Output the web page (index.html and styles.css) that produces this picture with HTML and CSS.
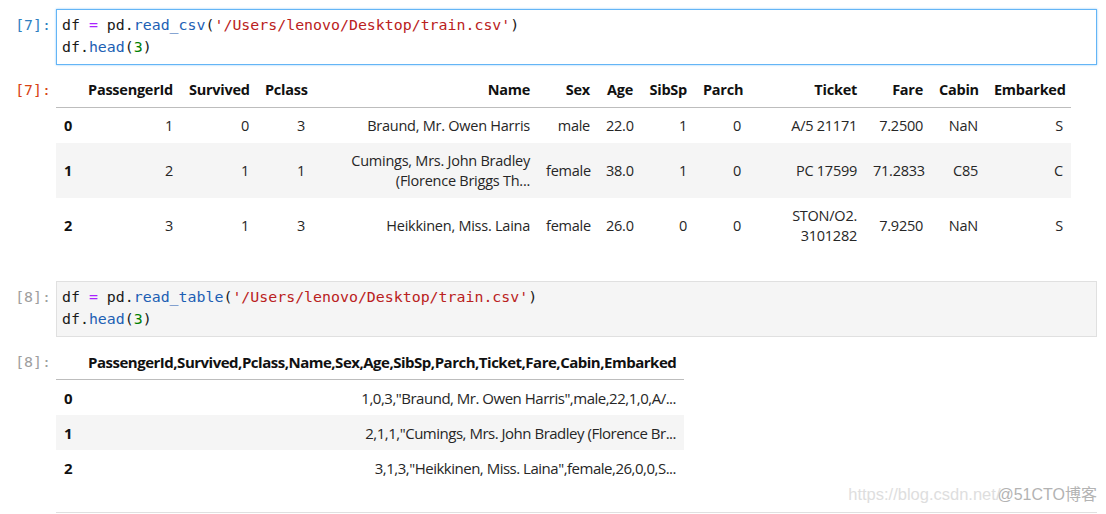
FILE: index.html
```html
<!DOCTYPE html>
<html>
<head>
<meta charset="utf-8">
<link rel="stylesheet" href="styles.css">
</head>
<body>
<div class="notebook">
  <div class="cell">
    <div class="row">
      <div class="prompt in-active">[7]:</div>
      <div class="input active">
        <div class="code-line"><span>df</span> <span class="op">=</span> <span>pd.</span><span class="prop">read_csv</span><span>(</span><span class="str">'/Users/lenovo/Desktop/train.csv'</span><span>)</span></div>
        <div class="code-line"><span>df.</span><span class="prop">head</span><span>(</span><span class="num">3</span><span>)</span></div>
      </div>
    </div>
    <div class="row out">
      <div class="prompt out-prompt">[7]:</div>
      <div class="output">
        <table class="df df-wide">
          <colgroup>
            <col class="c-idx"><col class="c-pid"><col class="c-surv"><col class="c-pcl"><col class="c-name"><col class="c-sex"><col class="c-age"><col class="c-sib"><col class="c-par"><col class="c-tic"><col class="c-fare"><col class="c-cab"><col class="c-emb">
          </colgroup>
          <thead>
            <tr><th></th><th>PassengerId</th><th>Survived</th><th>Pclass</th><th>Name</th><th>Sex</th><th>Age</th><th>SibSp</th><th>Parch</th><th>Ticket</th><th>Fare</th><th>Cabin</th><th>Embarked</th></tr>
          </thead>
          <tbody>
            <tr><th>0</th><td>1</td><td>0</td><td>3</td><td>Braund, Mr. Owen Harris</td><td>male</td><td>22.0</td><td>1</td><td>0</td><td>A/5 21171</td><td>7.2500</td><td>NaN</td><td>S</td></tr>
            <tr><th>1</th><td>2</td><td>1</td><td>1</td><td>Cumings, Mrs. John Bradley (Florence Briggs Th...</td><td>female</td><td>38.0</td><td>1</td><td>0</td><td>PC 17599</td><td>71.2833</td><td>C85</td><td>C</td></tr>
            <tr><th>2</th><td>3</td><td>1</td><td>3</td><td>Heikkinen, Miss. Laina</td><td>female</td><td>26.0</td><td>0</td><td>0</td><td>STON/O2. 3101282</td><td>7.9250</td><td>NaN</td><td>S</td></tr>
          </tbody>
        </table>
      </div>
    </div>
  </div>

  <div class="cell cell-2">
    <div class="row">
      <div class="prompt in-idle">[8]:</div>
      <div class="input idle">
        <div class="code-line"><span>df</span> <span class="op">=</span> <span>pd.</span><span class="prop">read_table</span><span>(</span><span class="str">'/Users/lenovo/Desktop/train.csv'</span><span>)</span></div>
        <div class="code-line"><span>df.</span><span class="prop">head</span><span>(</span><span class="num">3</span><span>)</span></div>
      </div>
    </div>
    <div class="row out">
      <div class="prompt out-idle">[8]:</div>
      <div class="output">
        <table class="df df-narrow">
          <colgroup>
            <col class="c-idx"><col class="c-all">
          </colgroup>
          <thead>
            <tr><th></th><th>PassengerId,Survived,Pclass,Name,Sex,Age,SibSp,Parch,Ticket,Fare,Cabin,Embarked</th></tr>
          </thead>
          <tbody>
            <tr><th>0</th><td>1,0,3,"Braund, Mr. Owen Harris",male,22,1,0,A/...</td></tr>
            <tr><th>1</th><td>2,1,1,"Cumings, Mrs. John Bradley (Florence Br...</td></tr>
            <tr><th>2</th><td>3,1,3,"Heikkinen, Miss. Laina",female,26,0,0,S...</td></tr>
          </tbody>
        </table>
      </div>
    </div>
  </div>

  <div class="next-cell"></div>
</div>
<div class="watermark"><span class="wm-url">https://blog.csdn.net/</span><span class="wm-brand">@51CTO博客</span></div>
</body>
</html>
```

FILE: styles.css
```css
html, body {
  margin: 0;
  padding: 0;
  background: #ffffff;
}

body {
  width: 1106px;
  height: 514px;
  overflow: hidden;
  position: relative;
  font-family: "Open Sans", "Noto Sans", sans-serif;
}

.notebook {
  padding-top: 9px;
  padding-right: 9px;
}

.row {
  display: flex;
  align-items: flex-start;
}

.prompt {
  width: 56px;
  flex: 0 0 56px;
  box-sizing: border-box;
  padding-right: 5px;
  text-align: right;
  font-family: "DejaVu Sans Mono", "Liberation Mono", monospace;
  font-size: 14.9px;
  line-height: 22px;
}

.in-active {
  color: #307fc1;
  padding-top: 5px;
}

.in-idle {
  color: #9e9e9e;
  padding-top: 5px;
}

.out-prompt {
  color: #d84315;
  padding-top: 7px;
}

.out-idle {
  color: #9e9e9e;
  padding-top: 7px;
}

.input {
  flex: 1;
  height: 56px;
  box-sizing: border-box;
  padding: 4px 5px 6px 5px;
}

.input.active {
  background: #ffffff;
  border: 1px solid #64b5f6;
  box-shadow: 0 0 2px #90caf9;
}

.input.idle {
  background: #f5f5f5;
  border: 1px solid #e0e0e0;
}

.code-line {
  font-family: "DejaVu Sans Mono", "Liberation Mono", monospace;
  font-size: 14.9px;
  line-height: 22px;
  height: 22px;
  white-space: pre;
  color: #1a1a1a;
}

.op { color: #aa22ff; }
.prop { color: #1d5fb4; }
.str { color: #ba2121; }
.num { color: #008000; }

.out {
  margin-top: 7px;
}

.output {
  flex: 1;
}

.df {
  border-collapse: collapse;
  table-layout: fixed;
  font-size: 14.5px;
  line-height: 20px;
  letter-spacing: -0.25px;
  color: #262626;
}

.df th, .df td {
  padding: 7.5px 8px;
  text-align: right;
  vertical-align: middle;
  white-space: normal;
}

.df thead th {
  font-weight: 700;
  color: #111;
  border-bottom: 1px solid #bdbdbd;
}

.df tbody th {
  text-align: left;
  font-weight: 700;
  color: #111;
}

.df tbody tr:nth-child(even) {
  background: #f5f5f5;
}

.df-wide { width: 1015px; }
.c-idx { width: 24px; }
.c-pid { width: 101px; }
.c-surv { width: 76px; }
.c-pcl { width: 56px; }
.c-name { width: 225px; }
.c-sex { width: 60px; }
.c-age { width: 43px; }
.c-sib { width: 54px; }
.c-par { width: 54px; }
.c-tic { width: 116px; }
.c-fare { width: 66px; }
.c-cab { width: 55px; }
.c-emb { width: 85px; }

.df-narrow {
  width: 628px;
  font-size: 15px;
}
.c-all { width: 604px; }

.df-narrow th, .df-narrow td {
  white-space: nowrap;
  letter-spacing: -0.49px;
}

.cell-2 {
  margin-top: 28px;
}

.next-cell {
  margin-top: 27px;
  margin-left: 56px;
  border-top: 1px solid #e0e0e0;
  height: 2px;
}

.watermark {
  position: absolute;
  right: 9px;
  top: 484px;
  font-family: "Liberation Sans", "Noto Sans CJK SC", sans-serif;
  line-height: 20px;
  white-space: nowrap;
}

.wm-url {
  font-size: 16.5px;
  color: #dedede;
}

.wm-brand {
  font-size: 16px;
  color: #b3b3b3;
  margin-left: -3px;
}
```
